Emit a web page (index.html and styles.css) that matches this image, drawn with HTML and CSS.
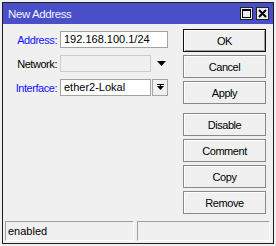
FILE: index.html
```html
<!DOCTYPE html>
<html>
<head>
<meta charset="utf-8">
<link rel="stylesheet" href="styles.css">
</head>
<body>
<div class="window">
  <div class="titlebar">
    <span class="title">New Address</span>
    <div class="tbtns">
      <span class="tbtn"><svg width="9" height="9" viewBox="0 0 9 9"><rect x="0.5" y="0.5" width="8" height="8" fill="none" stroke="#000" stroke-width="1"/><rect x="0" y="0" width="9" height="2" fill="#000"/></svg></span>
      <span class="tbtn"><svg width="9" height="9" viewBox="0 0 9 9"><path d="M1 1L8 8M8 1L1 8" stroke="#000" stroke-width="2"/></svg></span>
    </div>
  </div>
  <div class="content">
    <div class="main">
      <div class="form">
        <div class="row">
          <label class="lbl blue">Address:</label>
          <div class="input wide">192.168.100.1/24</div>
        </div>
        <div class="row">
          <label class="lbl">Network:</label>
          <div class="input narrow disabled"></div>
          <span class="drop"><svg width="9" height="5" viewBox="0 0 9 5"><path d="M0 0H9L4.5 5Z" fill="#000"/></svg></span>
        </div>
        <div class="row">
          <label class="lbl blue">Interface:</label>
          <div class="input narrow">ether2-Lokal</div>
          <span class="sel"><svg width="7" height="7" viewBox="0 0 7 7"><rect x="0" y="0" width="7" height="1" fill="#000"/><path d="M0 2H7L3.5 6Z" fill="#000"/><rect x="3" y="1" width="1" height="2" fill="#000"/></svg></span>
        </div>
      </div>
      <div class="buttons">
        <div class="btn default">OK</div>
        <div class="btn">Cancel</div>
        <div class="btn">Apply</div>
        <div class="btn sep">Disable</div>
        <div class="btn">Comment</div>
        <div class="btn">Copy</div>
        <div class="btn">Remove</div>
      </div>
    </div>
    <div class="status">
      <div class="cell left">enabled</div>
      <div class="cell right"></div>
    </div>
  </div>
</div>
</body>
</html>
```
FILE: styles.css
```css
html, body {
  margin: 0;
  padding: 0;
  background: #f0f0f0;
}
body {
  font-family: "Liberation Sans", Arial, sans-serif;
  font-size: 11px;
  color: #000;
}
.window {
  margin: 2px 0 0 2px;
  width: 270px;
  height: 240px;
  border: 1px solid #1e1e1e;
  display: flex;
  flex-direction: column;
  background: #f0f0f0;
}
.titlebar {
  height: 21px;
  background: #4a4ec9;
  display: flex;
  align-items: center;
  justify-content: space-between;
  padding: 0 4px 0 5px;
}
.title {
  color: #f2f2ff;
  font-size: 11.5px;
  letter-spacing: -0.4px;
}
.tbtns {
  display: flex;
  gap: 3px;
}
.tbtn {
  width: 11px;
  height: 11px;
  border: 1px solid #222;
  background: #ececec;
  display: flex;
  align-items: center;
  justify-content: center;
}
.content {
  flex: 1;
  display: flex;
  flex-direction: column;
}
.main {
  flex: 1;
  display: flex;
  justify-content: space-between;
}
.form {
  padding-top: 7px;
  display: flex;
  flex-direction: column;
  gap: 7px;
}
.row {
  display: flex;
  align-items: center;
  height: 17px;
}
.lbl {
  width: 54px;
  text-align: right;
  margin-right: 3px;
  font-size: 11px;
  letter-spacing: -0.45px;
}
.blue { color: #1010ff; }
.input {
  height: 15px;
  line-height: 15px;
  border: 1px solid #a3a3a3;
  background: #fff;
  padding-left: 3px;
  box-sizing: content-box;
  white-space: nowrap;
}
.wide { width: 103px; }
.narrow { width: 86px; }
.disabled {
  background: #f0f0f0;
  border-color: #cccccc;
}
.drop {
  width: 17px;
  display: flex;
  justify-content: center;
  padding-left: 2px;
}
.sel {
  margin-left: 1px;
  width: 14px;
  height: 15px;
  border: 1px solid #a3a3a3;
  background: #f0f0f0;
  display: flex;
  align-items: center;
  justify-content: center;
}
.buttons {
  padding: 5px 7px 0 0;
  display: flex;
  flex-direction: column;
  gap: 3px;
}
.btn {
  width: 81px;
  height: 21px;
  border: 1px solid #888888;
  box-shadow: inset 1px 1px #ffffff;
  background: #f0f0f0;
  display: flex;
  align-items: center;
  justify-content: center;
  font-size: 11px;
  letter-spacing: -0.45px;
}
.btn.default {
  border-color: #111;
  box-shadow: inset 1px 1px #fff, inset -1px -1px #a0a0a0;
}
.btn.sep { margin-top: 6px; }
.status {
  height: 20px;
  display: flex;
  gap: 3px;
  padding: 0 3px 2px 2px;
}
.cell {
  box-sizing: border-box;
  height: 20px;
  border-top: 1px solid #a0a0a0;
  border-left: 1px solid #a0a0a0;
  border-right: 1px solid #ffffff;
  border-bottom: 1px solid #ffffff;
  padding-left: 2px;
  line-height: 18px;
}
.left { width: 129px; }
.right { flex: 1; }
```
